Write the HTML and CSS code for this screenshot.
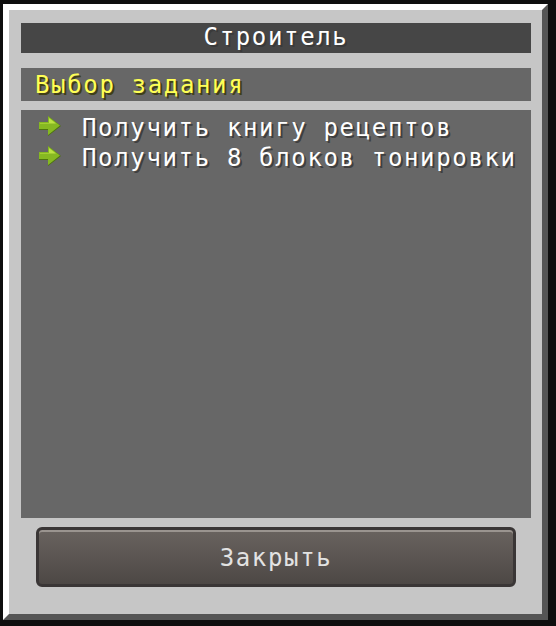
FILE: index.html
```html
<!DOCTYPE html>
<html lang="ru">
<head>
    <meta charset="UTF-8">
    <title>Строитель</title>
    <link rel="stylesheet" href="styles.css">
</head>
<body>
    <div class="window">
        <div class="title">Строитель</div>
        <div class="subtitle">Выбор задания</div>
        <ul class="tasks">
            <li>
                <svg class="arrow" width="23" height="20" viewBox="0 0 23 20">
                    <polygon points="0,7 9,7 9,0 22,10 9,20 9,14 0,14" fill="#4d7410"/>
                    <polygon points="0,6 9,6 9,0 21,9.5 9,19 9,13 0,13" fill="#86b822"/>
                    <polygon points="1,7 10,7 10,2 17,7.5 1,7.5" fill="#bde243"/>
                </svg>
                <span>Получить книгу рецептов</span>
            </li>
            <li>
                <svg class="arrow" width="23" height="20" viewBox="0 0 23 20">
                    <polygon points="0,7 9,7 9,0 22,10 9,20 9,14 0,14" fill="#4d7410"/>
                    <polygon points="0,6 9,6 9,0 21,9.5 9,19 9,13 0,13" fill="#86b822"/>
                    <polygon points="1,7 10,7 10,2 17,7.5 1,7.5" fill="#bde243"/>
                </svg>
                <span>Получить 8 блоков тонировки</span>
            </li>
        </ul>
        <div class="footer">
            <a href="javascript:;" class="btn">Закрыть</a>
        </div>
    </div>
</body>
</html>
```

FILE: styles.css
```css
html, body {
    margin: 0;
    padding: 0;
    background: #0e0e0e;
}
body {
    width: 556px;
    height: 626px;
    padding: 4px 0 0 3px;
    box-sizing: border-box;
    font-family: "DejaVu Sans Mono", "Liberation Mono", monospace;
    font-size: 24px;
    letter-spacing: 1.65px;
}
.window {
    width: 545px;
    height: 616px;
    box-sizing: border-box;
    background: #c6c6c6;
    border-top: 6px solid #fff;
    border-left: 6px solid #fff;
    border-right: 6px solid #555;
    border-bottom: 6px solid #555;
    padding: 13px 11px 27px 12px;
    display: flex;
    flex-direction: column;
}
.title {
    height: 30px;
    line-height: 28px;
    background: #464646;
    color: #fff;
    text-align: center;
    text-shadow: 2px 2px #3a3a3a;
    margin-bottom: 15px;
}
.subtitle {
    height: 33px;
    box-sizing: border-box;
    padding: 2px 0 0 14px;
    line-height: 31px;
    background: #676767;
    color: #ffff55;
    text-shadow: 2px 2px #3f3f15;
    margin-bottom: 9px;
}
.tasks {
    flex: 1;
    list-style: none;
    margin: 0 0 9px 0;
    padding: 3px 0 0 18px;
    background: #676767;
}
.tasks li {
    display: flex;
    align-items: flex-start;
    gap: 20px;
    height: 30px;
    line-height: 30px;
    color: #fff;
    text-shadow: 2px 2px #3f3f3f;
    white-space: nowrap;
}
.arrow {
    flex: none;
    margin-top: 3px;
}
.footer {
    padding: 0 15px;
}
.btn {
    display: block;
    height: 60px;
    box-sizing: border-box;
    border: 3px solid #3a3636;
    border-radius: 6px;
    background: linear-gradient(#69635f, #4d4845);
    box-shadow: inset 0 2px #9a948f;
    color: #e2e2e2;
    text-align: center;
    line-height: 56px;
    text-decoration: none;
}
```
